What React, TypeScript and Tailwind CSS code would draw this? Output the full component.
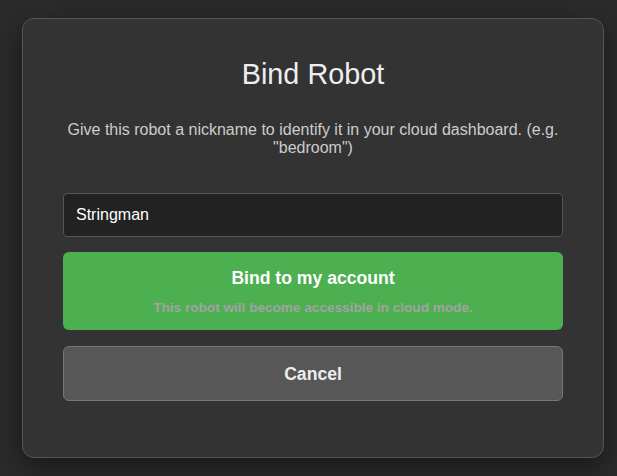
import React from "react";

export default function App() {
  return (
    <div
      className="w-[617px] h-[476px] overflow-hidden bg-[#2b2b2b] pt-[18px] pl-[22px]"
      style={{ fontFamily: '"Liberation Sans", Arial, sans-serif' }}
    >
      <div className="w-[582px] h-[440px] rounded-[12px] border border-[#555555] bg-[#333333] shadow-[0_10px_30px_rgba(0,0,0,0.45)] px-[40px] pt-[39px] flex flex-col">
        <h2 className="text-center text-[28.8px] leading-[33px] text-[#eeeeee] font-normal">
          Bind Robot
        </h2>
        <p className="mt-[30px] text-center text-[16px] leading-[18px] text-[#cccccc]">
          Give this robot a nickname to identify it in your cloud dashboard. (e.g.
          "bedroom")
        </p>
        <input
          className="mt-[36px] h-[44px] w-full rounded-[4px] border border-[#555555] bg-[#222222] px-[12px] text-[16px] text-white outline-none"
          defaultValue="Stringman"
          style={{ fontFamily: '"Liberation Sans", Arial, sans-serif' }}
        />
        <div className="mt-[15px] h-[78px] w-full rounded-[6px] bg-[#4caf50] flex flex-col items-center pt-[16px]">
          <div className="text-[17.6px] leading-[20px] font-bold text-white">
            Bind to my account
          </div>
          <div className="mt-[12px] text-[13.6px] leading-[16px] font-bold text-[#a3a3a3]">
            This robot will become accessible in cloud mode.
          </div>
        </div>
        <div className="mt-[16px] h-[55px] w-full rounded-[6px] border border-[#777777] bg-[#575757] flex items-center justify-center">
          <span className="text-[17.6px] leading-[20px] font-bold text-[#eeeeee]">
            Cancel
          </span>
        </div>
      </div>
    </div>
  );
}
